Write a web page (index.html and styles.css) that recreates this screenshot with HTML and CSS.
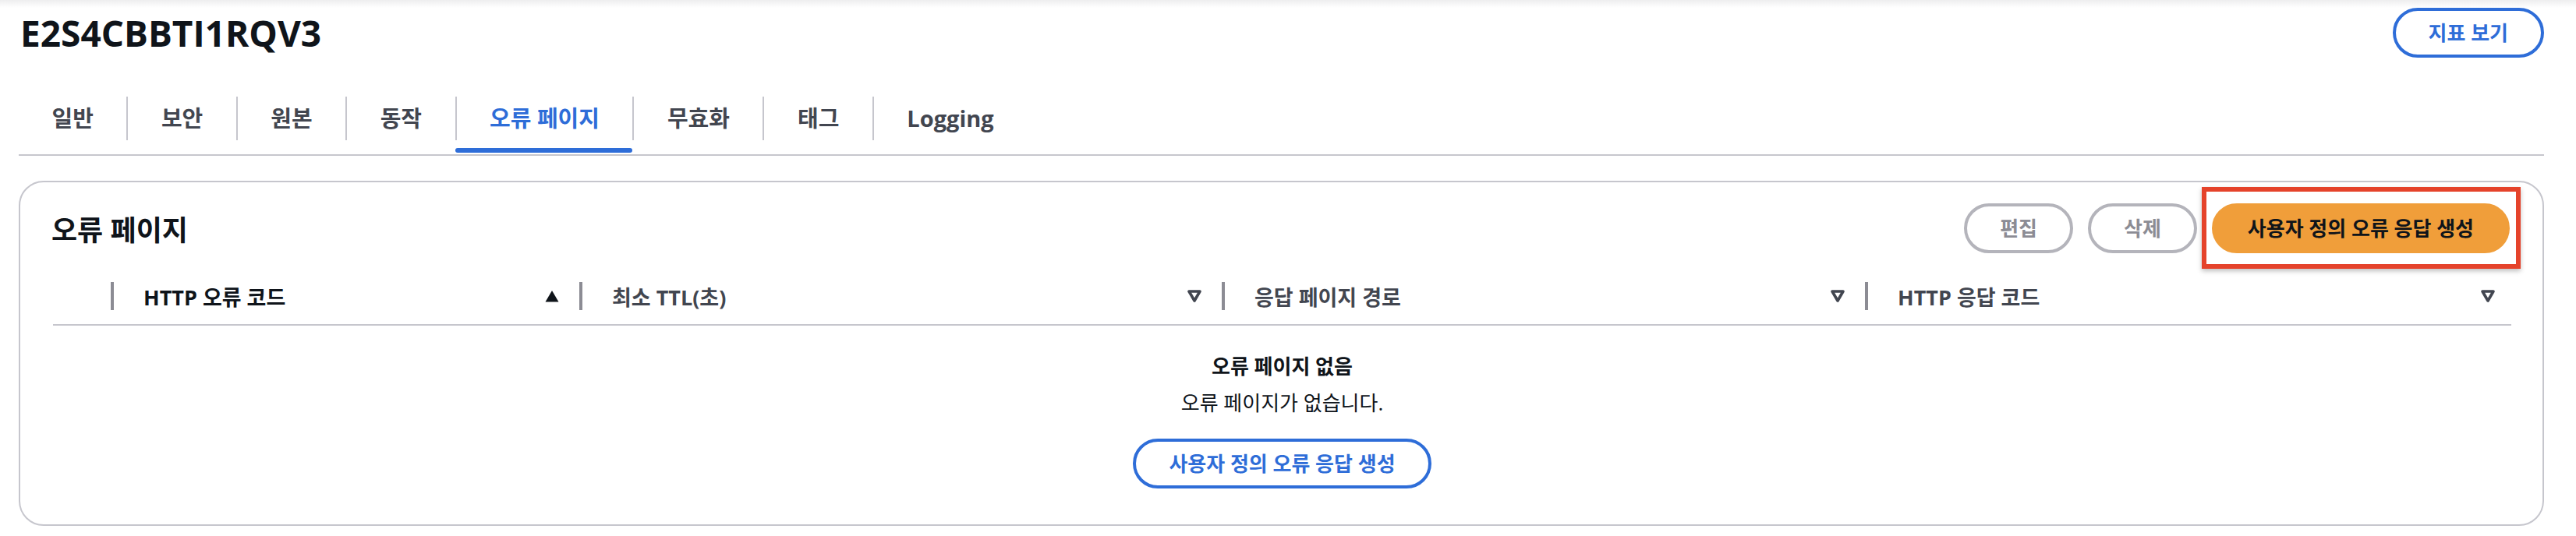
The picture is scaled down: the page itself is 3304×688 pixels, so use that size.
FILE: index.html
```html
<!DOCTYPE html>
<html lang="ko">

<head>
  <meta charset="UTF-8" />
  <meta name="viewport" content="width=device-width, initial-scale=1" />
  <title>E2S4CBBTI1RQV3 - 오류 페이지</title>
  <link rel="stylesheet" href="styles.css">
</head>

<body>
  <main class="page">
    <header class="page-header">
      <h1 class="page-title">E2S4CBBTI1RQV3</h1>
      <button class="btn btn-normal">지표 보기</button>
    </header>

    <nav class="tabs">
      <div class="tab"><span class="tab-label">일반</span></div>
      <div class="tab"><span class="tab-label">보안</span></div>
      <div class="tab"><span class="tab-label">원본</span></div>
      <div class="tab"><span class="tab-label">동작</span></div>
      <div class="tab tab-active"><span class="tab-label">오류 페이지</span></div>
      <div class="tab"><span class="tab-label">무효화</span></div>
      <div class="tab"><span class="tab-label">태그</span></div>
      <div class="tab"><span class="tab-label">Logging</span></div>
    </nav>

    <section class="card">
      <div class="card-header">
        <h2 class="card-title">오류 페이지</h2>
        <div class="actions">
          <button class="btn btn-disabled">편집</button>
          <button class="btn btn-disabled">삭제</button>
          <span class="highlight">
            <button class="btn btn-primary">사용자 정의 오류 응답 생성</button>
          </span>
        </div>
      </div>

      <div class="table">
        <div class="table-head">
          <div class="th th-select"></div>
          <div class="th th-sorted">
            <span>HTTP 오류 코드</span>
            <svg class="sort-icon" viewBox="0 0 20 18"><path d="M10 2 L18.5 16.5 H1.5 Z" fill="#0f141a" /></svg>
          </div>
          <div class="th">
            <span>최소 TTL(초)</span>
            <svg class="sort-icon" viewBox="0 0 20 18"><path d="M3 3 H17 L10 15 Z" fill="none" stroke="#424650" stroke-width="3.6" stroke-linejoin="round" /></svg>
          </div>
          <div class="th">
            <span>응답 페이지 경로</span>
            <svg class="sort-icon" viewBox="0 0 20 18"><path d="M3 3 H17 L10 15 Z" fill="none" stroke="#424650" stroke-width="3.6" stroke-linejoin="round" /></svg>
          </div>
          <div class="th">
            <span>HTTP 응답 코드</span>
            <svg class="sort-icon" viewBox="0 0 20 18"><path d="M3 3 H17 L10 15 Z" fill="none" stroke="#424650" stroke-width="3.6" stroke-linejoin="round" /></svg>
          </div>
        </div>

        <div class="empty">
          <p class="empty-title">오류 페이지 없음</p>
          <p class="empty-text">오류 페이지가 없습니다.</p>
          <button class="btn btn-normal">사용자 정의 오류 응답 생성</button>
        </div>
      </div>
    </section>
  </main>
</body>

</html>
```

FILE: styles.css
```css
body {
  margin: 0;
  font-family: "Open Sans", "Noto Sans CJK KR", sans-serif;
  color: #0f141a;
  background: #fff linear-gradient(#eeeeef, #ffffff 10px) no-repeat;
}

.page {
  padding: 10px 41px 0 24px;
}

.page-header {
  display: flex;
  justify-content: space-between;
  align-items: center;
  height: 64px;
}

.page-title {
  margin: 0;
  padding-left: 2px;
  font-size: 46px;
  line-height: 64px;
  font-weight: 700;
}

/* buttons */
.btn {
  box-sizing: border-box;
  height: 64px;
  padding: 0 42px;
  border: 4px solid;
  border-radius: 32px;
  background: #fff;
  font-family: inherit;
  font-size: 26px;
  font-weight: 700;
  line-height: 56px;
  white-space: nowrap;
  cursor: pointer;
}

.btn-normal {
  border-color: #2e6dd8;
  color: #2e6dd8;
}

.btn-disabled {
  border-color: #b4b4bb;
  color: #8c8c94;
  cursor: default;
}

.btn-primary {
  border-color: #f09e3a;
  background-color: #f09e3a;
  color: #0f141a;
}

/* tabs */
.tabs {
  display: flex;
  margin-top: 50px;
  border-bottom: 2px solid #c6c6cd;
}

.tab {
  display: flex;
  flex-direction: column;
}

.tab::after {
  content: "";
  height: 6px;
  margin: 10px 0 2px;
  border-radius: 3px;
}

.tab-label {
  height: 56px;
  padding: 0 42.5px;
  font-size: 29px;
  font-weight: 700;
  line-height: 56px;
  color: #424650;
}

.tab + .tab .tab-label {
  border-left: 2px solid #c6c6cd;
}

.tab-active .tab-label {
  color: #2e6dd8;
}

.tab-active::after {
  background: #2e6dd8;
}

/* container */
.card {
  margin-top: 32px;
  border: 2px solid #c6c6cd;
  border-radius: 32px;
}

.card-header {
  display: flex;
  justify-content: space-between;
  align-items: center;
  padding: 24px 42px 0 40px;
}

.card-title {
  margin: 0;
  padding-top: 6px;
  font-size: 36px;
  font-weight: 700;
  line-height: 64px;
}

.actions {
  display: flex;
  align-items: center;
  gap: 19px;
}

.highlight {
  position: relative;
  display: flex;
}

.highlight::after {
  content: "";
  position: absolute;
  top: -21px;
  right: -14px;
  bottom: -20px;
  left: -13px;
  border: 6px solid #e5432b;
  box-shadow: 0 3px 6px rgba(0, 0, 0, 0.25);
  pointer-events: none;
}

/* table */
.table {
  margin: 16px 40px 0 42px;
}

.table-head {
  display: grid;
  grid-template-columns: 74px 601px 824px 825px 1fr;
  align-items: center;
  height: 72px;
  border-bottom: 2px solid #c6c6cd;
}

.th {
  display: flex;
  justify-content: space-between;
  align-items: center;
  height: 36px;
  padding: 0 25px 0 38px;
  border-left: 4px solid #8c8c94;
  font-size: 27px;
  font-weight: 700;
  color: #424650;
}

.th-select {
  border: none;
  padding: 0;
}

.th:last-child {
  padding-right: 20px;
}

.th-sorted {
  color: #0f141a;
}

.sort-icon {
  width: 20px;
  height: 18px;
}

.empty {
  padding: 34px 0 46px;
  text-align: center;
}

.empty-title {
  margin: 0;
  font-size: 26px;
  font-weight: 700;
  line-height: 36px;
}

.empty-text {
  margin: 11px 0 28px;
  font-size: 26px;
  line-height: 36px;
}
```
